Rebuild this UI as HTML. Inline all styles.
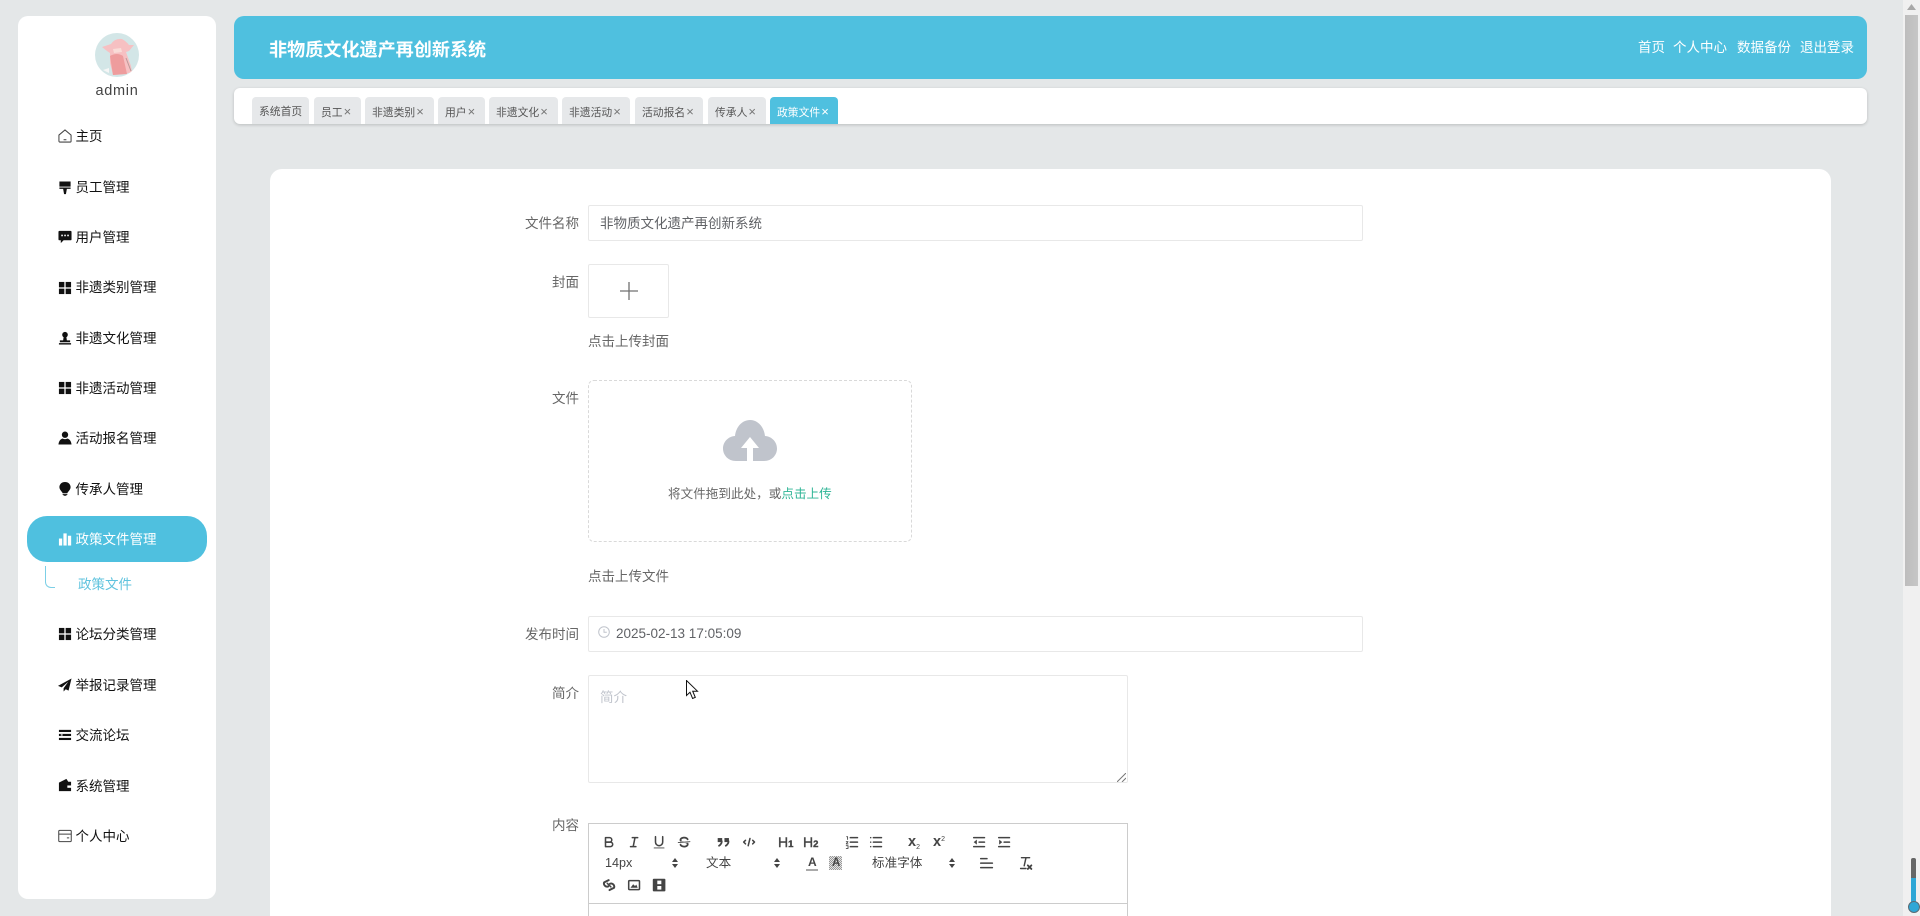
<!DOCTYPE html>
<html lang="zh-CN">
<head>
<meta charset="utf-8">
<title>非物质文化遗产再创新系统</title>
<style>
*{box-sizing:border-box;margin:0;padding:0}
html,body{width:1920px;height:916px;overflow:hidden;background:#e4e7e8;font-family:"Liberation Sans","Noto Sans CJK SC",sans-serif}
#root{position:absolute;left:0;top:0;width:1920px;height:916px;overflow:hidden;background:#e4e7e8}
.a{position:absolute}
.side{position:absolute;left:18px;top:16px;width:198px;height:883px;background:#fff;border-radius:10px}
.m{position:absolute;left:75.5px;height:20px;line-height:22px;font-size:13.5px;color:#111;white-space:nowrap}
.i{position:absolute;left:58px;width:14px;height:14px}
.t{position:absolute;top:97px;height:27px;line-height:29px;background:#e6e8ea;border-radius:4px 4px 0 0;font-size:10.8px;color:#555;padding-left:7px;white-space:nowrap}
.t b{font-weight:normal;font-size:13px;color:#777;margin-left:1px}
.t.on{background:#4fc0df;color:#fff}
.t.on b{color:#fff}
.n{position:absolute;top:37px;height:20px;line-height:21px;font-size:13.5px;color:#fff;white-space:nowrap}
.l{position:absolute;height:20px;line-height:22px;font-size:13.5px;color:#666;right:1341px;white-space:nowrap}
.x{position:absolute;height:20px;line-height:22px;font-size:13.5px;color:#666;white-space:nowrap}
.box{position:absolute;background:#fff;border:1px solid #e8e8e8;border-radius:2px}
.q{position:absolute;width:16.2px;height:16.2px;fill:none;stroke:#444;stroke-width:1.7;stroke-linecap:round;stroke-linejoin:round;overflow:visible}
.q .f{fill:#444;stroke:none}
.q .th{stroke-width:1}
.tb{position:absolute;height:18px;line-height:18px;font-size:12.6px;color:#444;white-space:nowrap}
.hd{font-weight:bold;font-size:14px;color:#444}
.hd small{font-size:9.5px;font-weight:bold}
.ar{position:absolute;width:8px;height:12px;fill:#444}
</style>
</head>
<body>
<div id="root">
<!-- Sidebar -->
<div class="side"></div>
<svg class="a" style="left:95px;top:33px;width:44px;height:44px" viewBox="0 0 44 44">
<defs><clipPath id="av"><circle cx="22" cy="22" r="22"/></clipPath></defs>
<g clip-path="url(#av)">
<rect width="44" height="44" fill="#d3e6e7"/>
<path d="M7 14 L16 11 Q20 5 27 6 Q31 8 34 12 L39 12 L34 18 L31 19 L36 33 L37 39 L30 41 L18 42 L15 30 L15 20 L12 18Z" fill="#f6c0c2"/>
<path d="M15 23 Q22 19 28 23 L32 41 L18 42Z" fill="#ee9c9d"/>
<path d="M18 16 L26 15 L27 19 L19 20Z" fill="#f9dcd8"/>
<path d="M31 25 L36 38" stroke="#b99" stroke-width="1" fill="none"/>
<path d="M8 37 L14 35 L14 40Z" fill="#f6f6f6"/>
</g></svg>
<div class="a" style="left:18px;width:198px;top:81px;height:20px;line-height:20px;text-align:center;font-size:14.5px;letter-spacing:.7px;color:#444">admin</div>

<!-- active pill -->
<div class="a" style="left:27px;top:516px;width:180px;height:46px;background:#4fc0df;border-radius:20px"></div>
<div class="a" style="left:45px;top:566px;width:10px;height:22px;border-left:1px solid #7ccfe6;border-bottom:1px solid #7ccfe6;border-radius:0 0 0 6px"></div>

<svg class="i" style="top:129px" viewBox="0 0 15 15" fill="none" stroke="#444" stroke-width="1.1"><path d="M1 6.500 7.500 1 14 6.500V13a1 1 0 0 1-1 1H2a1 1 0 0 1-1-1Z"/><path d="M6 11.500h3"/></svg>
<div class="m" style="top:126px">主页</div>

<svg class="i" style="top:181px" viewBox="0 0 15 15" fill="#111"><path d="M1.500 .5h12v5.500h-12zM1.500 7h12v1.500H9.500L8.500 14h-2L5.500 8.500h-4z"/></svg>
<div class="m" style="top:177px">员工管理</div>

<svg class="i" style="top:230px" viewBox="0 0 15 15"><path d="M1.500 1h12a1 1 0 0 1 1 1v8a1 1 0 0 1-1 1H6l-3 3v-3H1.500a1 1 0 0 1-1-1V2a1 1 0 0 1 1-1z" fill="#111"/><g fill="#fff"><rect x="3.500" y="5" width="1.700" height="1.700"/><rect x="6.700" y="5" width="1.700" height="1.700"/><rect x="9.900" y="5" width="1.700" height="1.700"/></g></svg>
<div class="m" style="top:227px">用户管理</div>

<svg class="i" style="top:281px" viewBox="0 0 15 15" fill="#111"><rect x="1" y="1" width="5.800" height="5.800"/><rect x="8.200" y="1" width="5.800" height="5.800"/><rect x="1" y="8.200" width="5.800" height="5.800"/><rect x="8.200" y="8.200" width="5.800" height="5.800"/></svg>
<div class="m" style="top:277px">非遗类别管理</div>

<svg class="i" style="top:331px" viewBox="0 0 15 15" fill="#111"><circle cx="7.500" cy="4" r="3"/><path d="M6 6.500h3l.5 3.500h3.500v2H2v-2h3.500z"/><rect x="1" y="13" width="13" height="1.500"/></svg>
<div class="m" style="top:328px">非遗文化管理</div>

<svg class="i" style="top:381px" viewBox="0 0 15 15" fill="#111"><rect x="1" y="1" width="5.800" height="5.800"/><rect x="8.200" y="1" width="5.800" height="5.800"/><rect x="1" y="8.200" width="5.800" height="5.800"/><rect x="8.200" y="8.200" width="5.800" height="5.800"/></svg>
<div class="m" style="top:378px">非遗活动管理</div>

<svg class="i" style="top:431px" viewBox="0 0 15 15" fill="#111"><circle cx="7.500" cy="4" r="3.400"/><path d="M.5 14.500c.3-4 2.500-6 4.500-6.500 1.500 1 3.500 1 5 0 2 .5 4.200 2.500 4.500 6.500z"/></svg>
<div class="m" style="top:428px">活动报名管理</div>

<svg class="i" style="top:482px" viewBox="0 0 15 15" fill="#111"><path d="M7.500 0C3.800 0 1.500 2.600 1.500 5.500c0 3 3 5 3.500 6.500h5c.5-1.500 3.500-3.500 3.500-6.500C13.500 2.600 11.200 0 7.500 0z"/><rect x="5" y="12.800" width="5" height="1"/><rect x="6" y="14.200" width="3" height=".8"/></svg>
<div class="m" style="top:479px">传承人管理</div>

<svg class="i" style="top:532px" viewBox="0 0 15 15" fill="#fff"><rect x="1" y="7" width="3.500" height="7.500"/><rect x="5.800" y="1.500" width="3.500" height="13"/><rect x="10.600" y="4" width="3.500" height="10.500"/></svg>
<div class="m" style="top:529px;color:#fff">政策文件管理</div>

<div class="m" style="left:78px;top:574px;color:#5fc3de">政策文件</div>

<svg class="i" style="top:627px" viewBox="0 0 15 15" fill="#111"><rect x="1" y="1" width="5.800" height="5.800"/><rect x="8.200" y="1" width="5.800" height="5.800"/><rect x="1" y="8.200" width="5.800" height="5.800"/><rect x="8.200" y="8.200" width="5.800" height="5.800"/></svg>
<div class="m" style="top:624px">论坛分类管理</div>

<svg class="i" style="top:678px" viewBox="0 0 15 15" fill="#111"><path d="M14.500.5 0 8.500l4 1.500 7-6-5 7v3.500l2.300-2.500 3 1.500z"/></svg>
<div class="m" style="top:675px">举报记录管理</div>

<svg class="i" style="top:728px" viewBox="0 0 15 15" fill="#111"><rect x="1" y="2" width="13" height="2.300"/><rect x="1" y="6.300" width="13" height="2.300"/><rect x="1" y="10.600" width="13" height="2.300"/><rect x="3" y="6.800" width="2" height="1.300" fill="#fff"/></svg>
<div class="m" style="top:725px">交流论坛</div>

<svg class="i" style="top:778px" viewBox="0 0 15 15" fill="#111"><path d="M1 5 9 1l2 3h3v10H1z"/><rect x="10" y="8" width="5" height="2.500" fill="#fff"/></svg>
<div class="m" style="top:776px">系统管理</div>

<svg class="i" style="top:829px" viewBox="0 0 15 15" fill="none" stroke="#444" stroke-width="1.100"><rect x=".8" y="1.500" width="13.400" height="12" rx="1"/><path d="M.8 5.500h13.400M9.500 9.500h2.500"/></svg>
<div class="m" style="top:826px">个人中心</div>

<!-- Header -->
<div class="a" style="left:234px;top:16px;width:1633px;height:63px;background:#4fc0df;border-radius:10px"></div>
<div class="a" style="left:269px;top:37px;height:26px;line-height:26px;font-size:18.1px;font-weight:bold;color:#fff;white-space:nowrap">非物质文化遗产再创新系统</div>
<div class="n" style="left:1638px">首页</div>
<div class="n" style="left:1673px">个人中心</div>
<div class="n" style="left:1737px">数据备份</div>
<div class="n" style="left:1800px">退出登录</div>

<!-- Tabs -->
<div class="a" style="left:234px;top:88px;width:1633px;height:36px;background:#fff;border-radius:6px;box-shadow:0 1px 3px rgba(0,0,0,.18)"></div>
<div class="t" style="left:252px;width:57px;line-height:31px">系统首页</div>
<div class="t" style="left:314px;width:47px">员工<b>×</b></div>
<div class="t" style="left:365px;width:69px">非遗类别<b>×</b></div>
<div class="t" style="left:438px;width:47px">用户<b>×</b></div>
<div class="t" style="left:489px;width:69px">非遗文化<b>×</b></div>
<div class="t" style="left:562px;width:68px">非遗活动<b>×</b></div>
<div class="t" style="left:635px;width:68px">活动报名<b>×</b></div>
<div class="t" style="left:708px;width:58px">传承人<b>×</b></div>
<div class="t on" style="left:770px;width:68px">政策文件<b>×</b></div>

<!-- Card -->
<div class="a" style="left:270px;top:169px;width:1561px;height:760px;background:#fff;border-radius:12px"></div>

<div class="l" style="top:213px">文件名称</div>
<div class="box" style="left:588px;top:205px;width:775px;height:36px"></div>
<div class="x" style="left:600px;top:213px;color:#606266">非物质文化遗产再创新系统</div>

<div class="l" style="top:272px">封面</div>
<div class="box" style="left:588px;top:264px;width:81px;height:54px"></div>
<svg class="a" style="left:620px;top:282px;width:18px;height:18px" viewBox="0 0 18 18" stroke="#707070" stroke-width="1.300"><path d="M0 9h18M9 0v18"/></svg>
<div class="x" style="left:588px;top:331px">点击上传封面</div>

<div class="l" style="top:388px">文件</div>
<div class="a" style="left:588px;top:380px;width:324px;height:162px;border:1px dashed #d9d9d9;border-radius:6px;background:#fff"></div>
<svg class="a" style="left:723px;top:420px;width:54px;height:41px" viewBox="0 0 54 41"><path d="M13 41C5 41 0 35 0 28.500 0 22 5 16.500 12 16 13 7 19 0 27 0s14 7 15 16c7 .5 12 6 12 12.500C54 35 49 41 41 41H30V28h6L27 17 18 28h6v13z" fill="#c0c4cc"/></svg>
<div class="a" style="left:668px;top:483px;height:20px;line-height:22px;font-size:12.6px;color:#666;white-space:nowrap">将文件拖到此处，或<span style="color:#2fb596">点击上传</span></div>
<div class="x" style="left:588px;top:566px">点击上传文件</div>

<div class="l" style="top:624px">发布时间</div>
<div class="box" style="left:588px;top:616px;width:775px;height:36px"></div>
<svg class="a" style="left:598px;top:626px;width:12px;height:12px" viewBox="0 0 12 12" fill="none" stroke="#c0c4cc" stroke-width="1"><circle cx="6" cy="6" r="5.300"/><path d="M6 3v3.300h2.800"/></svg>
<div class="x" style="left:616px;top:623px;color:#606266">2025-02-13 17:05:09</div>

<div class="l" style="top:683px">简介</div>
<div class="box" style="left:588px;top:675px;width:540px;height:108px"></div>
<div class="x" style="left:600px;top:687px;color:#c0c4cc">简介</div>
<svg class="a" style="left:1117px;top:773px;width:9px;height:9px" viewBox="0 0 9 9" stroke="#777" stroke-width="1"><path d="M0 9 9 0M5 9l4-4"/></svg>
<svg class="a" style="left:686px;top:680px;width:13px;height:20px" viewBox="0 0 13 20"><path d="M.5.5V15.500l3.500-3.300 2.600 6.300 2.700-1.100-2.600-6.200H11.500Z" fill="#fff" stroke="#111" stroke-width="1"/></svg>

<div class="l" style="top:815px">内容</div>
<div class="a" style="left:588px;top:823px;width:540px;height:120px;border:1px solid #ccc;background:#fff"></div>
<div class="a" style="left:589px;top:903px;width:538px;height:1px;background:#ccc"></div>

<!-- Row 1 -->
<svg class="q" style="left:601px;top:834px" viewBox="0 0 18 18"><path d="M5,4H9.500A2.500,2.500,0,0,1,12,6.500v0A2.500,2.500,0,0,1,9.500,9H5V4Z"/><path d="M5,9h5.500A2.500,2.500,0,0,1,13,11.500v0A2.500,2.500,0,0,1,10.500,14H5V9Z"/></svg>
<svg class="q" style="left:626px;top:834px" viewBox="0 0 18 18"><path d="M7 4h6M5 14h6M8 14 10 4"/></svg>
<svg class="q" style="left:651px;top:834px" viewBox="0 0 18 18"><path d="M5,3V9a4,4,0,0,0,4,4h0a4,4,0,0,0,4-4V3"/><rect class="f" height="1" rx=".5" width="12" x="3" y="15"/></svg>
<svg class="q" style="left:676px;top:834px" viewBox="0 0 18 18"><path class="th" d="M15.500 8.500 2.500 9.500"/><path class="f" d="M9,8C6.500,7.800,6,7.500,6,6.500,6,5.800,7.300,5,9,5c1.600,0,2.800.7,3,1.300a1,1,0,0,0,1.900-.6C13.400,4.100,11.400,3,9,3,6.200,3,4,4.500,4,6.500a3.200,3.200,0,0,0,.5,1.800Z"/><path class="f" d="M9,10C11.500,10.200,12,10.500,12,11.500c0,.7-1.300,1.500-3,1.500-1.600,0-2.800-.7-3-1.300a1,1,0,1,0-1.900.6C4.600,13.900,6.600,15,9,15c2.800,0,5-1.500,5-3.500a3.200,3.200,0,0,0-.5-1.800Z"/></svg>
<svg class="q" style="left:715px;top:834px" viewBox="0 0 18 18"><rect class="f" height="4.500" width="5" x="3" y="4.500"/><rect class="f" height="4.500" width="5" x="10.500" y="4.500"/><path stroke-width="2" d="M7.500,8c0,2.500-1.500,4-3,5"/><path stroke-width="2" d="M15,8c0,2.500-1.500,4-3,5"/></svg>
<svg class="q" style="left:741px;top:834px" viewBox="0 0 18 18"><path d="M5 7 3 9 5 11M13 7l2 2-2 2M10 5 8 13"/></svg>
<div class="tb hd" style="left:778px;top:833px;font-weight:normal;-webkit-text-stroke:.4px #444">H<small>1</small></div>
<div class="tb hd" style="left:803px;top:833px;font-weight:normal;-webkit-text-stroke:.4px #444">H<small>2</small></div>
<svg class="q" style="left:844px;top:834px" viewBox="0 0 18 18"><path d="M7 4h8M7 9h8M7 14h8"/><path class="th" d="M3 3h1v3M2.500 8.500h2l-2 2.500h2M2.500 13h2v3h-2"/></svg>
<svg class="q" style="left:868px;top:834px" viewBox="0 0 18 18"><path d="M6 4h9M6 9h9M6 14h9M3 4h0M3 9h0M3 14h0"/></svg>
<div class="tb hd" style="left:908px;top:833px;font-size:14.500px">x<small style="font-size:7px;font-weight:normal;position:relative;top:3px">2</small></div>
<div class="tb hd" style="left:933px;top:833px;font-size:14.500px">x<small style="font-size:7px;font-weight:normal;position:relative;top:-5px">2</small></div>
<svg class="q" style="left:971px;top:834px" viewBox="0 0 18 18"><path d="M3 4h12M3 14h12M9 9h6"/><path class="f" d="M3 9l3.500-2.800v5.600z"/></svg>
<svg class="q" style="left:996px;top:834px" viewBox="0 0 18 18"><path d="M3 4h12M3 14h12M9 9h6"/><path class="f" d="M7 9 3.500 6.200v5.600z"/></svg>

<!-- Row 2 -->
<div class="tb" style="left:605px;top:854px">14px</div>
<svg class="ar" style="left:671px;top:857px" viewBox="0 0 8 12"><path d="M4 1 7 5H1zM4 11 1 7h6z"/></svg>
<div class="tb" style="left:706px;top:854px">文本</div>
<svg class="ar" style="left:773px;top:857px" viewBox="0 0 8 12"><path d="M4 1 7 5H1zM4 11 1 7h6z"/></svg>
<div class="tb" style="left:808px;top:853px;font-weight:bold;font-size:12px">A</div>
<div class="a" style="left:806px;top:869px;width:12px;height:1.500px;background:#aaa"></div>
<div class="a" style="left:829px;top:856px;width:13px;height:14px;background:repeating-conic-gradient(#999 0 25%,#e4e4e4 0 50%) 0 0/2px 2px"></div>
<div class="tb" style="left:832px;top:854px;font-weight:bold;font-size:11.500px">A</div>
<div class="tb" style="left:872px;top:854px">标准字体</div>
<svg class="ar" style="left:948px;top:857px" viewBox="0 0 8 12"><path d="M4 1 7 5H1zM4 11 1 7h6z"/></svg>
<svg class="q" style="left:978px;top:855px" viewBox="0 0 18 18"><path d="M3 4h7M3 9h13M3 14h13"/></svg>
<svg class="q" style="left:1017px;top:855px" viewBox="0 0 18 18"><path d="M5 3h9M10 3 8 12M4 15h6" stroke-width="1.600"/><path stroke-width="2" d="M12 11.500l4 4M16 11.500l-4 4"/></svg>

<!-- Row 3 -->
<svg class="q" style="left:601px;top:877px" viewBox="0 0 18 18"><path d="M7 7l4 4"/><path stroke-width="2.200" d="M8.500 3.500 3.500 6a3.500 3.500 0 0 0 4.500 4.500M9.500 14.500l5-2.500a3.500 3.500 0 0 0-4.500-4.500"/></svg>
<svg class="q" style="left:626px;top:877px" viewBox="0 0 18 18"><rect height="10" width="12" x="3" y="4" rx="1"/><path class="f" d="M5 12l3-4 2 2 1.500-1.500L13 12z"/></svg>
<svg class="q" style="left:651px;top:877px" viewBox="0 0 18 18"><rect class="f" x="2" y="2" width="14" height="14" rx="1"/><rect x="7" y="4" width="4.500" height="4" fill="#fff" stroke="none"/><rect x="7" y="10" width="4.500" height="4" fill="#fff" stroke="none"/></svg>

<!-- Scrollbar -->
<div class="a" style="left:1903px;top:0;width:17px;height:916px;background:#f0f0f0"></div>
<div class="a" style="left:1905px;top:15px;width:13px;height:571px;background:linear-gradient(90deg,#bdbdbd,#c6c6c6)"></div>
<svg class="a" style="left:1907px;top:4px;width:9px;height:6px" viewBox="0 0 9 6"><path d="M4.500 0 9 6H0z" fill="#a8a8a8"/></svg>

<!-- Thermometer widget -->
<div class="a" style="left:1911px;top:858px;width:5px;height:46px;background:#666;border-radius:2px 2px 0 0"></div>
<div class="a" style="left:1911px;top:878px;width:5px;height:28px;background:#2ea7d6"></div>
<div class="a" style="left:1908px;top:901px;width:12px;height:12px;background:#2ea7d6;border:1px solid #5a6c75;border-radius:50%"></div>
</div>
</body>
</html>
